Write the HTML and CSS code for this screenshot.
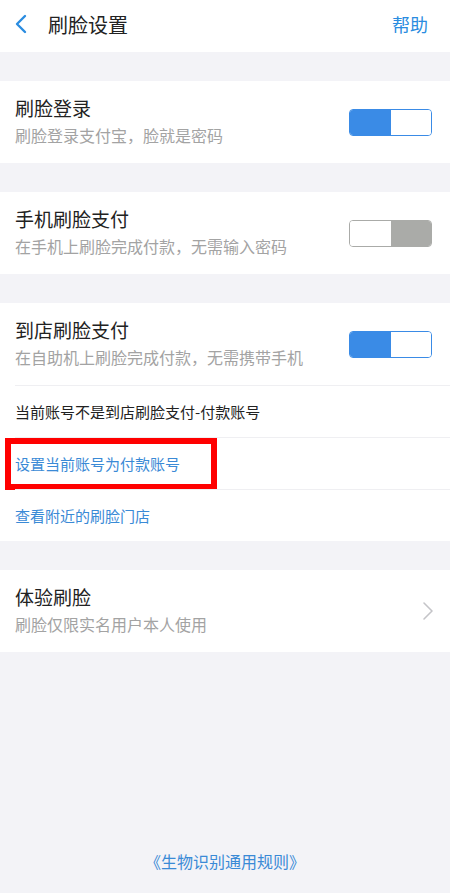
FILE: index.html
```html
<!DOCTYPE html>
<html lang="zh-CN">

<head>
    <meta charset="UTF-8">
    <meta name="viewport" content="width=device-width, initial-scale=1.0">
    <title>刷脸设置</title>
    <link rel="stylesheet" href="styles.css">
</head>

<body>

    <div class="page">
        <!-- Top bar -->
        <div class="topbar">
            <svg class="back" width="14" height="20" viewBox="0 0 14 20">
                <path d="M11 2 L3 10 L11 18" fill="none" stroke="#2a8ce0" stroke-width="2.4" stroke-linecap="round" stroke-linejoin="round"/>
            </svg>
            <span class="title">刷脸设置</span>
            <span class="help">帮助</span>
        </div>

        <div class="group">
            <div class="row">
                <div class="text">
                    <div class="row-title">刷脸登录</div>
                    <div class="row-sub">刷脸登录支付宝，脸就是密码</div>
                </div>
                <div class="switch on"><span></span><span></span></div>
            </div>
        </div>

        <div class="group">
            <div class="row">
                <div class="text">
                    <div class="row-title">手机刷脸支付</div>
                    <div class="row-sub">在手机上刷脸完成付款，无需输入密码</div>
                </div>
                <div class="switch off"><span></span><span></span></div>
            </div>
        </div>

        <div class="group">
            <div class="row">
                <div class="text">
                    <div class="row-title">到店刷脸支付</div>
                    <div class="row-sub">在自助机上刷脸完成付款，无需携带手机</div>
                </div>
                <div class="switch on"><span></span><span></span></div>
            </div>
            <div class="line-row">当前账号不是到店刷脸支付-付款账号</div>
            <div class="line-row link marked">设置当前账号为付款账号</div>
            <div class="line-row link">查看附近的刷脸门店</div>
        </div>

        <div class="group">
            <div class="row">
                <div class="text">
                    <div class="row-title">体验刷脸</div>
                    <div class="row-sub">刷脸仅限实名用户本人使用</div>
                </div>
                <svg class="chevron" width="12" height="20" viewBox="0 0 12 20">
                    <path d="M2 2 L10 10 L2 18" fill="none" stroke="#c4c4c8" stroke-width="1.6" stroke-linecap="round" stroke-linejoin="round"/>
                </svg>
            </div>
        </div>

        <div class="footer">《生物识别通用规则》</div>
    </div>

</body>

</html>
```

FILE: styles.css
```css
body {
    margin: 0;
    padding: 0;
    background-color: #f3f3f7;
    font-family: "Noto Sans CJK SC", "Noto Sans", sans-serif;
    color: #222;
}

.page {
    width: 450px;
    height: 893px;
    display: flex;
    flex-direction: column;
}

.topbar {
    height: 52px;
    background-color: #fff;
    display: flex;
    align-items: center;
    padding: 0 22px 4px 14px;
    box-sizing: border-box;
}

.topbar .back {
    margin-right: 20px;
}

.topbar .title {
    font-size: 20px;
    color: #222;
    flex: 1;
}

.topbar .help {
    font-size: 18px;
    color: #2a8ce0;
}

.group {
    background-color: #fff;
    margin-top: 29px;
}

.row {
    height: 82px;
    display: flex;
    align-items: center;
    padding: 0 18px 0 15px;
}

.row .text {
    flex: 1;
    padding-bottom: 4px;
}

.row-title {
    font-size: 19px;
    line-height: 26px;
    color: #222;
}

.row-sub {
    font-size: 16px;
    line-height: 22px;
    margin-top: 3px;
    color: #a3a3a3;
}

.switch {
    width: 83px;
    height: 27px;
    border-radius: 4px;
    display: flex;
    overflow: hidden;
    box-sizing: border-box;
}

.switch span {
    flex: 1;
}

.switch.on {
    border: 1px solid #3a8be6;
}

.switch.on span:first-child {
    background-color: #3a8be6;
}

.switch.on span:last-child {
    background-color: #fff;
}

.switch.off {
    border: 1px solid #aaaba8;
}

.switch.off span:first-child {
    background-color: #fff;
}

.switch.off span:last-child {
    background-color: #aaaba8;
}

.chevron {
    margin-right: -2px;
}

.line-row {
    position: relative;
    height: 51px;
    line-height: 51px;
    margin-left: 15px;
    border-top: 1px solid #efeff2;
    font-size: 15px;
    color: #222;
}

.line-row.link {
    color: #3a8ad6;
}

.line-row.marked::after {
    content: "";
    position: absolute;
    left: -10px;
    top: 0;
    width: 212px;
    height: 52px;
    border: 6px solid #ff0000;
    box-sizing: border-box;
}

.footer {
    margin-top: auto;
    margin-bottom: 20px;
    text-align: center;
    font-size: 16px;
    color: #3a8ad6;
}
```
